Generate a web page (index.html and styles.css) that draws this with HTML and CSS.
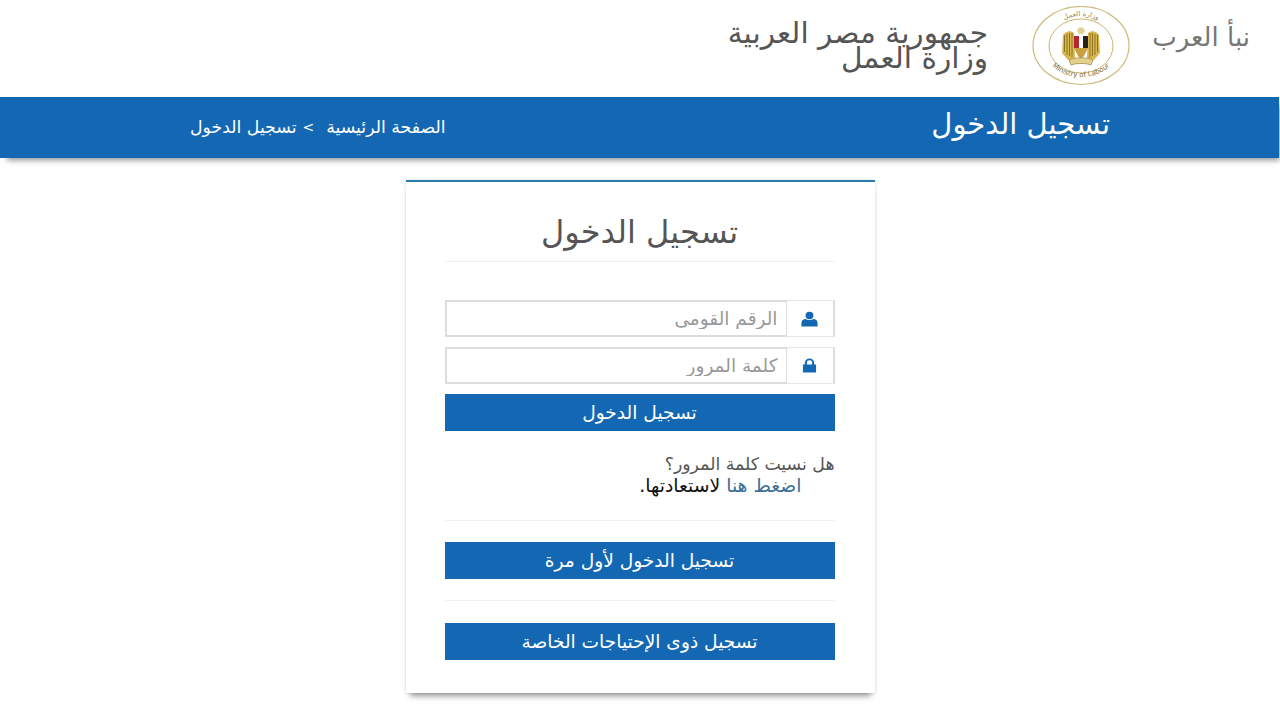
FILE: index.html
```html
<!DOCTYPE html>
<html lang="ar" dir="rtl">
<head>
    <meta charset="utf-8">
    <title>تسجيل الدخول</title>
    <link rel="stylesheet" href="styles.css">
</head>
<body>
    <header class="site-header">
        <div class="brand">نبأ العرب</div>
        <svg class="emblem" viewBox="0 0 98 80" width="98" height="80" dir="ltr">
            <defs>
                <path id="arc-top" d="M15 39 A34 29 0 0 1 83 39"></path>
                <path id="arc-bottom" d="M10 38 A39 33 0 0 0 88 38"></path>
            </defs>
            <ellipse cx="49" cy="39.5" rx="48" ry="39" fill="#fff" stroke="#cdbb7c" stroke-width="1.2"></ellipse>
            <ellipse cx="49" cy="40" rx="32" ry="27" fill="#fff" stroke="#cbb56c" stroke-width="1"></ellipse>
            <text class="emblem-ar" font-size="7" fill="#9a8848"><textPath href="#arc-top" startOffset="50%" text-anchor="middle">وزارة العمل</textPath></text>
            <text class="emblem-en" font-size="7" fill="#7a6a30"><textPath href="#arc-bottom" startOffset="50%" text-anchor="middle">Ministry of Labour</textPath></text>
            <path d="M42 27 C38 24 34 25 31 29 L30 47 L36 54 L43 52 Z" fill="#d8b64e"></path>
            <path d="M56 27 C60 24 64 25 67 29 L68 47 L62 54 L55 52 Z" fill="#d8b64e"></path>
            <path d="M32.500 29v17M35 28v21M37.500 27v23M40 27v24M58 27v24M60.500 27v23M63 28v21M65.500 29v17" stroke="#8f7222" stroke-width="1"></path>
            <path d="M45 25 L47 21.500 L51 21.500 L53 25 L51 28 H47 Z" fill="#e3d298"></path>
            <rect x="42" y="30" width="5" height="12" fill="#b3262c"></rect>
            <rect x="47" y="30" width="4" height="12" fill="#fff"></rect>
            <rect x="51" y="30" width="5" height="12" fill="#26221c"></rect>
            <path d="M42 42 H56 L52 50 L49 53 L46 50 Z" fill="#c9a23e"></path>
            <path d="M37 54 C42 51 56 51 61 54 L59 59 C54 57 44 57 39 59 Z" fill="#e3cf8e" stroke="#8f7222" stroke-width=".6"></path>
        </svg>
        <div class="ministry">
            <div>جمهورية مصر العربية</div>
            <div>وزارة العمل</div>
        </div>
    </header>

    <div class="title-bar">
        <h1>تسجيل الدخول</h1>
        <div class="breadcrumb">
            <a href="#">الصفحة الرئيسية</a>
            <span class="sep">&gt;</span>
            <span>تسجيل الدخول</span>
        </div>
    </div>

    <main class="login-card">
        <h2>تسجيل الدخول</h2>
        <form class="login-form">
            <div class="input-group">
                <span class="input-icon">
                    <svg viewBox="0 0 16 16" width="17" height="16" preserveAspectRatio="none"><circle cx="8" cy="4.400" r="3.700"></circle><path d="M0.400 15.400 V12 C0.400 9.400 2.400 8 4.400 8 C6 9.200 10 9.200 11.600 8 C13.600 8 15.600 9.400 15.600 12 V15.400 Z"></path></svg>
                </span>
                <input type="text" placeholder="الرقم القومى">
            </div>
            <div class="input-group">
                <span class="input-icon">
                    <svg viewBox="0 0 16 16" width="15" height="15"><path d="M1 7 H3 V5 A5 4.600 0 0 1 13 5 V7 H15 V15.500 H1 Z M5.200 7 H10.800 V5 A2.800 2.600 0 0 0 5.200 5 Z" fill-rule="evenodd"></path></svg>
                </span>
                <input type="password" placeholder="كلمة المرور">
            </div>
            <button type="submit" class="btn">تسجيل الدخول</button>
        </form>
        <div class="forgot">
            <p>هل نسيت كلمة المرور؟</p>
            <p class="forgot-link"><a href="#">اضغط هنا</a> لاستعادتها.</p>
        </div>
        <hr>
        <button class="btn">تسجيل الدخول لأول مرة</button>
        <hr>
        <button class="btn">تسجيل ذوى الإحتياجات الخاصة</button>
    </main>
</body>
</html>
```

FILE: styles.css
```css
body {
    font-family: "DejaVu Sans", sans-serif;
    background-color: #fff;
    margin: 0;
    min-height: 100vh;
    color: #555;
}
.site-header {
    display: flex;
    align-items: center;
    height: 96px;
    padding-right: 30px;
}
.brand {
    width: 98px;
    font-size: 26px;
    color: #777;
    white-space: nowrap;
    margin-bottom: 22px;
}
.emblem {
    margin-right: 22px;
    margin-bottom: 4px;
}
.ministry {
    margin-right: 44px;
    margin-bottom: 5px;
    font-size: 29.600px;
    line-height: 25px;
    color: #555;
}
.title-bar {
    box-sizing: border-box;
    display: flex;
    justify-content: space-between;
    align-items: center;
    height: 61px;
    padding: 0 169px 8px 190px;
    margin-top: 1px;
    margin-right: 1px;
    background-color: #1468b3;
    color: #fff;
    box-shadow: 4px 5px 6px -3px rgba(0,0,0,0.45);
}
.title-bar h1 {
    margin: 0;
    font-size: 29px;
    font-weight: normal;
}
.breadcrumb {
    font-size: 17.300px;
    display: flex;
    align-items: center;
    gap: 6px;
    padding-top: 6px;
}
.breadcrumb a {
    color: #fff;
    text-decoration: none;
    margin-left: 6px;
}
.sep {
    font-size: 14px;
}
.login-card {
    box-sizing: border-box;
    width: 469px;
    height: 513px;
    margin: 22px auto 0;
    padding: 0 40px 0 39px;
    border-top: 2px solid #2b7cab;
    box-shadow: 0 0 3px rgba(0,0,0,0.15), 0 7px 6px -4px rgba(0,0,0,0.4);
}
.login-card h2 {
    margin: 0 0 38px;
    padding: 32px 0 10px;
    font-size: 32px;
    line-height: 37px;
    font-weight: normal;
    text-align: center;
    color: #555;
    border-bottom: 1px solid #eee;
}
.input-group {
    display: flex;
    height: 37px;
    margin-bottom: 10px;
}
.input-icon {
    display: flex;
    align-items: center;
    justify-content: center;
    width: 46px;
    border-top: 1px solid #e6e6e6;
    border-bottom: 1px solid #e6e6e6;
    border-right: 2px solid #ddd;
}
.input-icon svg {
    fill: #1468b3;
}
.input-group input {
    flex: 1;
    min-width: 0;
    box-sizing: border-box;
    padding: 0 8px 0 7px;
    border: 2px solid #ddd;
    border-right-width: 1px;
    font-family: inherit;
    font-size: 18.500px;
    color: #555;
    outline: none;
}
.input-group input::placeholder {
    color: #999;
}
.btn {
    display: block;
    width: 100%;
    height: 37px;
    padding: 0;
    border: none;
    background-color: #1468b3;
    color: #fff;
    font-family: inherit;
    font-size: 18.600px;
    cursor: pointer;
}
.forgot {
    margin-top: 22px;
    font-size: 17.300px;
    line-height: 22px;
    color: #555;
}
.forgot p {
    margin: 0;
}
.forgot-link {
    padding-right: 33px;
    font-size: 18.800px;
    color: #111;
}
.forgot-link a {
    color: #3a7099;
    text-decoration: none;
}
.login-card hr {
    margin: 21px 0 22px;
    border: none;
    border-top: 1px solid #eee;
}
.login-card .forgot + hr {
    margin: 23px 0 21px;
}
```
